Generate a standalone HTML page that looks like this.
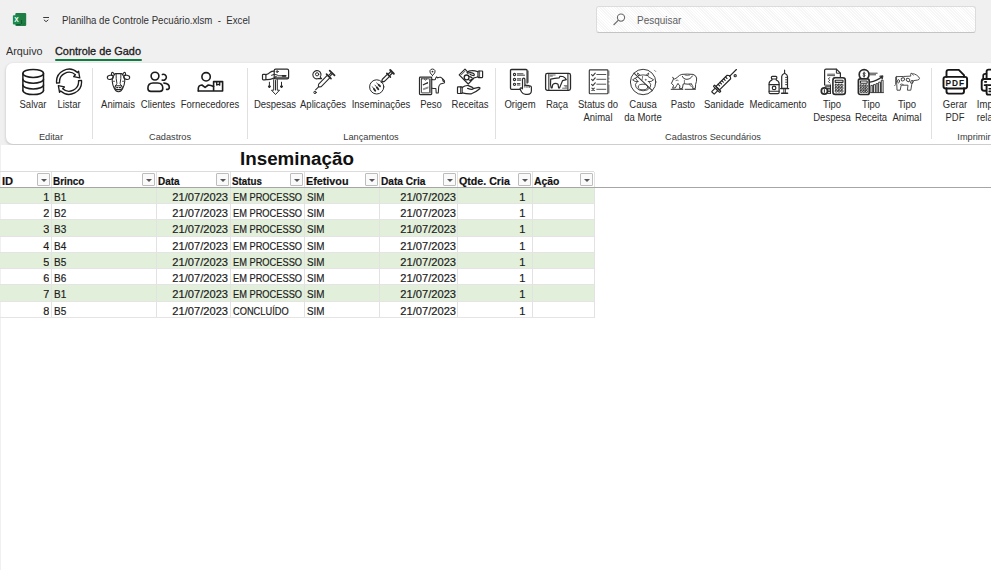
<!DOCTYPE html>
<html lang="pt-BR">
<head>
<meta charset="utf-8">
<title>Planilha de Controle Pecuário.xlsm - Excel</title>
<style>
*{box-sizing:border-box;margin:0;padding:0}
html,body{width:991px;height:570px;overflow:hidden;background:#f0f0f0;font-family:"Liberation Sans",sans-serif;color:#222}
.abs{position:absolute}
#title{left:62px;top:13.5px;font-size:10.5px;line-height:13px;color:#303030;white-space:nowrap;transform-origin:left center;transform:scaleX(.92)}
#search{left:596px;top:6px;width:380px;height:26.6px;background:repeating-linear-gradient(45deg,#fff 0,#fff 1px,#f6f6f6 1px,#f6f6f6 2px);border:1px solid #dcdcdc;border-bottom-color:#c4c4c4;border-radius:3px}
#search span{position:absolute;left:39.5px;top:6.5px;font-size:10.5px;line-height:13px;color:#5e5e5e;transform-origin:left center;transform:scaleX(.95)}
.tab{top:44.4px;font-size:11px;line-height:14px;color:#303030;white-space:nowrap;transform-origin:left center;transform:scaleX(.98)}
#ribbon{left:6px;top:63.4px;width:1000px;height:80.6px;background:#fff;border-radius:7px;box-shadow:0 1px 3px rgba(0,0,0,.22)}
.sep{top:68px;width:1px;height:71px;background:#e0e0e0}
.lbl{top:97.5px;font-size:10px;line-height:13px;color:#2b2b2b;text-align:center;white-space:nowrap;transform:translateX(-50%) scaleX(.95)}
.grp{top:130.7px;font-size:9.5px;line-height:12px;color:#3a3a3a;white-space:nowrap;transform:translateX(-50%) scaleX(.97)}
.ico{top:67px;width:30px;height:30px;transform:translateX(-50%)}
.ico svg{width:30px;height:30px;display:block;fill:none;stroke:#2a2a2a;stroke-width:1.2;stroke-linecap:round;stroke-linejoin:round}
#sheet{left:1px;top:145px;width:991px;height:425px;background:#fff}
#h1{left:240px;top:148.4px;font-size:18.9px;font-weight:bold;line-height:22px;color:#111;white-space:nowrap;transform-origin:left center;transform:scaleX(.995)}
.row{left:0;width:594px;height:16px}
.g{background:#e2efda}
.c{position:absolute;top:1.1px;height:100%;font-size:11.6px;line-height:16px;-webkit-text-stroke:.2px #1c1c1c;color:#1c1c1c;white-space:nowrap;overflow:hidden}
.c span{display:inline-block}
.r{text-align:right}
.r span{transform-origin:right center}
.l span{transform-origin:left center}
.hd{font-weight:bold;color:#111}
.vl{top:172px;width:1px;height:146px;background:#e2e2e2}
.hl{left:0;width:594px;height:1px;background:#e4e4e4}
.fb{top:173px;width:13px;height:13px;border:1px solid #bdbdbd;background:#fafafa;border-radius:1px}
.fb i{position:absolute;left:3px;top:5px;width:0;height:0;border-left:3px solid transparent;border-right:3px solid transparent;border-top:3px solid #555}
</style>
</head>
<body>
<svg class="abs" style="left:12px;top:12px" width="16" height="16" viewBox="12 12 16 16"><rect x="15.3" y="12.9" width="10.9" height="13.1" rx="1.1" fill="#1f7e46"/><rect x="12.9" y="15.3" width="7" height="9.2" rx=".8" fill="#1b8a4b"/><path d="M16.3 24.6H20.6M21.6 20V24M23.4 24.4l1-1" stroke="#12472a" stroke-width=".8" fill="none"/><text x="16.55" y="22.3" text-anchor="middle" font-family="Liberation Sans, sans-serif" font-weight="bold" font-size="6.6" fill="#fff">X</text></svg>
<svg class="abs" style="left:42px;top:16px" width="9" height="8" viewBox="42 16 9 8" fill="none" stroke="#3a3a3a" stroke-width="1"><path d="M43.2 17.5H49M43.9 19.8L46.1 21.7L48.3 19.8"/></svg>
<div class="abs" id="title">Planilha de Controle Pecuário.xlsm&nbsp; -&nbsp; Excel</div>
<div class="abs" id="search"><svg class="abs" style="left:15px;top:5px" width="14" height="14" viewBox="0 0 14 14" fill="none" stroke="#6a6a6a" stroke-width="1.1"><circle cx="9" cy="5.6" r="3.6"/><path d="M6.4 8.2L1.6 13"/></svg><span>Pesquisar</span></div>
<div class="abs tab" style="left:6.4px">Arquivo</div>
<div class="abs tab" style="left:54.8px;color:#1a1a1a;-webkit-text-stroke:.3px #1a1a1a;transform:scaleX(.99)">Controle de Gado</div>
<div class="abs" style="left:54.8px;top:59px;width:87.4px;height:2px;background:#107c41;border-radius:1px"></div>
<div class="abs" id="ribbon"></div>
<div class="abs sep" style="left:92px"></div>
<div class="abs sep" style="left:247px"></div>
<div class="abs sep" style="left:495px"></div>
<div class="abs sep" style="left:931px"></div>
<div class="abs ico" style="left:33px"><svg viewBox="0 0 30 30"><g stroke-width="1.5" stroke="#1c1c1c"><ellipse cx="15.2" cy="6.4" rx="10.3" ry="4"/><path d="M4.9 6.4V23.6M25.5 6.4V23.6"/><path d="M4.9 12.2A10.3 4 0 0 0 25.5 12.2M4.9 17.9A10.3 4 0 0 0 25.5 17.9M4.9 23.6A10.3 4 0 0 0 25.5 23.6"/></g></svg></div>
<div class="abs lbl" style="left:33px">Salvar</div>
<div class="abs ico" style="left:69px"><svg viewBox="0 0 30 30"><g stroke-width="1.35" stroke="#1c1c1c" fill="#fff"><path d="M2.62 16.06A12.5 12.5 0 0 1 23.41 5.46L24.55 4.20L25.76 10.85L19.73 9.55L21.41 7.69A9.5 9.5 0 0 0 5.60 15.74Z"/><path d="M27.48 13.44A12.5 12.5 0 0 1 6.69 24.04L5.55 25.30L4.34 18.65L10.37 19.95L8.69 21.81A9.5 9.5 0 0 0 24.50 13.76Z"/></g></svg></div>
<div class="abs lbl" style="left:69px">Listar</div>
<div class="abs ico" style="left:118px"><svg viewBox="0 0 30 30"><g stroke-width="1.1" stroke="#262626"><path d="M11.4 7.6Q11.8 6.6 12.8 6.6H18.2Q19.2 6.6 19.6 7.6"/><path d="M11.4 7.6Q9 10 9.2 14Q9.6 18 11 20.8Q12.6 24.6 15.5 24.8Q18.4 24.6 20 20.8Q21.4 18 21.8 14Q22 10 19.6 7.6"/><ellipse cx="7.3" cy="10.3" rx="3" ry="2.1" transform="rotate(-10 7.3 10.3)"/><ellipse cx="23.7" cy="10.3" rx="3" ry="2.1" transform="rotate(10 23.7 10.3)"/><path d="M8.7 8.3Q8.1 5.5 9.3 5.2Q10.5 5.5 11.3 7.5"/><path d="M22.3 8.3Q22.9 5.5 21.7 5.2Q20.5 5.5 19.7 7.5"/><path d="M13.1 7Q12.9 12 13.9 16.4Q13.6 18 12.2 18.9M17.9 7Q18.1 12 17.1 16.4Q17.4 18 18.8 18.9" stroke-width=".95"/><rect x="11.9" y="18.7" width="7.4" height="3.9" rx="1.9"/><path d="M13.7 20.6h1.1M16.4 20.6h1.1" stroke-width="1.2"/><path d="M10.3 14.3Q10.9 13.7 11.6 14.2M19.4 14.2Q20.1 13.7 20.7 14.3" stroke-width=".8"/></g></svg></div>
<div class="abs lbl" style="left:118px">Animais</div>
<div class="abs ico" style="left:158px"><svg viewBox="0 0 30 30"><g stroke-width="1.6" stroke="#1c1c1c"><circle cx="12" cy="9.1" r="3.9"/><path d="M4.9 21.3Q4.9 16 10 16H14.7Q19.8 16 19.8 21.3Q19.8 24.4 16.8 24.4H7.9Q4.9 24.4 4.9 21.3Z"/><path d="M19.4 7.4A3 3 0 1 1 19.2 13"/><path d="M20.9 16.1Q26.3 16.3 26.3 20.4Q26.3 22.4 23.6 22.4"/></g></svg></div>
<div class="abs lbl" style="left:158px">Clientes</div>
<div class="abs ico" style="left:210px"><svg viewBox="0 0 30 30"><g stroke-width="1.6" stroke="#1c1c1c"><circle cx="11.1" cy="9.8" r="4.2"/><path d="M3.3 24V21.6Q3.3 18.4 6.9 18L10.1 20.4L13.3 18Q16 18.2 18.6 19.4"/><path d="M3.3 24H27.6V14.6H18.6V24"/><path d="M21.7 14.6V18.1L23.2 17.2L24.7 18.1V14.6" stroke-width="1.3"/></g></svg></div>
<div class="abs lbl" style="left:210px">Fornecedores</div>
<div class="abs ico" style="left:275px"><svg viewBox="0 0 30 30"><g stroke-width="1" stroke="#2a2a2a" style="overflow:visible"><rect x="14.2" y="2.2" width="14.4" height="9.6" rx="1.4" stroke-width="1.2"/><rect x="2.5" y="7.3" width="3.4" height="5.6" rx=".8" stroke-width="1.2"/><path d="M5.9 7.6Q8.5 7.2 10.3 5.2Q11.4 4.2 14.2 4.2" stroke-width="1.2"/><path d="M5.9 12.6Q9.6 12.9 13.2 11.4L16.2 9.6" stroke-width="1.2"/><path d="M11.5 8.2Q14 6.6 17.3 7.9" /><path d="M17.8 8.8H26M22.8 8.8h2.6" /><path d="M22.6 8.8h2.8" stroke-width="1.8"/><path d="M15.6 10.8H28"/><circle cx="17.2" cy="4.6" r=".9"/><path d="M13.7 12.6V23.2H11.5L15.5 27.5L19.5 23.2H17.3V12.6M15.5 13.5V23"/><path d="M9.4 15.2V20M21.5 15.2V20"/><path d="M8.4 19.4L9.4 21L10.4 19.4ZM20.5 19.4L21.5 21L22.5 19.4Z" fill="#2a2a2a"/></g></svg></div>
<div class="abs lbl" style="left:275px">Despesas</div>
<div class="abs ico" style="left:323px"><svg viewBox="0 0 30 30"><g stroke-width="1" stroke="#2a2a2a"><path d="M12.2 10.2A4.1 4.1 0 1 0 10.3 11.6L13.6 11.6Z" stroke-width="1.1"/><circle cx="9.1" cy="7.3" r="1.6"/><circle cx="7" cy="25.4" r="1.2"/></g><g transform="translate(7.6 22.8) rotate(-45.5)" stroke-width="1.05" stroke="#2a2a2a"><path d="M0 0H4.6"/><path d="M4.6 -.7L6.199999999999999 -1.8H18.77185850116757V1.8H6.199999999999999L4.6 .7Z"/><path d="M18.77185850116757 -3.2V3.2" stroke-width="1.55"/><path d="M18.77185850116757 -0.8H23.37185850116757M18.77185850116757 0.8H23.37185850116757"/><path d="M23.571858501167572 -3.4V3.4" stroke-width="1.75"/></g></svg></div>
<div class="abs lbl" style="left:323px">Aplicações</div>
<div class="abs ico" style="left:381px"><svg viewBox="0 0 30 30"><g stroke-width="1" stroke="#2a2a2a"><circle cx="10.7" cy="19.9" r="7.1"/><path d="M8 22L9.2 23.7M10.9 20.4L12.3 22.3M12.7 17.8L14 19.2" stroke-width="1.9"/><path d="M6.4 19.8L8 22M9 18.1L10.9 20.4M10.6 15.9L12.7 17.8" stroke-width=".8"/></g><g transform="translate(15.3 15.4) rotate(-44.5)" stroke-width="1.2" stroke="#2a2a2a"><path d="M0 0H1.4"/><path d="M1.4 -.7L3.0 -1.5H10.215576538034508V1.5H3.0L1.4 .7Z"/><path d="M10.215576538034508 -2.5V2.5" stroke-width="1.7"/><path d="M10.215576538034508 -1.1H14.81557653803451M10.215576538034508 1.1H14.81557653803451"/><path d="M15.015576538034509 -2.6V2.6" stroke-width="1.9"/></g></svg></div>
<div class="abs lbl" style="left:381px">Inseminações</div>
<div class="abs ico" style="left:431px"><svg viewBox="0 0 30 30"><g stroke-width="1" stroke="#2a2a2a"><rect x="3.5" y="10.1" width="12.2" height="17.5" rx=".8" stroke-width="1.2"/><rect x="5.4" y="11.8" width="8.3" height="14.1" rx=".3" stroke-width=".9"/><path d="M14.7 11.8V26" stroke-width="1" stroke="#777"/><path d="M8.3 12L9.5 13.1L10.7 12" stroke-width=".9"/><path d="M7.3 17.8L11.4 15.9" stroke-width="1.2"/><circle cx="11.5" cy="15.8" r=".6" fill="#2a2a2a" stroke="none"/><path d="M7.3 21.8L12 20.1M7.6 22.6L12 21" stroke-width=".7" stroke="#555"/><path d="M16.5 8.6Q13.2 5.6 13.9 3.8A2.8 2.8 0 0 1 19.1 3.8Q19.8 5.6 16.5 8.6Z" stroke-width=".95"/><circle cx="16.5" cy="4.6" r=".9" fill="#2a2a2a" stroke="none"/><path d="M15.9 12.6Q17.8 13 19.3 12.4Q19.8 10.6 20.6 9.9L21.6 10.9Q23 9.9 24.6 10.3Q26.6 11.4 28.5 13.8Q28.9 15.4 28.1 16L24.4 17Q23 18.4 22.7 19.8L22.3 26H20.2L19.9 21.5Q18 21.6 15.9 21.2" stroke-width="1.05"/><path d="M26.6 12.6L27.4 14.4" stroke-width="1.2"/></g></svg></div>
<div class="abs lbl" style="left:431px">Peso</div>
<div class="abs ico" style="left:470px"><svg viewBox="0 0 30 30"><g stroke-width="1.2" stroke="#262626"><rect x="23" y="4" width="4.6" height="6.6" rx=".5" stroke-width="1.2"/><path d="M24.6 4V10.6" stroke-width=".8"/><path d="M23 4.8Q19.5 3.4 16.6 3.6Q13.6 3.6 12 5.6"/><path d="M23 9.8Q20.6 10.8 19 10.8Q18.4 12.6 16 12.6"/><path d="M4.2 7.9L10 2.1L12.6 4.8M4.2 7.9L13.2 17L17 13.2" /><path d="M6.3 7.9L10 4.2" stroke-width=".8"/><circle cx="11.6" cy="10.4" r="2.4" stroke-width="1.3"/><path d="M12.6 6.2Q15.6 4.8 18.6 6.6Q19.8 7.4 19 8.6Q16.8 8.4 15.2 7.4"/><path d="M14.6 9.6Q16.2 9.8 17.4 11.2M13.6 12.6Q14.8 13.6 16 13.4"/><rect x="2.5" y="19.9" width="4.6" height="6.6" rx=".5" stroke-width="1.2"/><path d="M5.5 19.9V26.5" stroke-width=".8"/><path d="M7.1 20.6Q10.6 18 13.4 18.6L17.4 20.4Q18.8 21.2 17.8 22.2Q16 22.6 12.6 21.4"/><path d="M18.2 21.6L23.6 20.4Q25.4 20.4 24.8 21.8Q20.6 25.4 16.4 26.8Q12.6 27.2 7.1 25.8"/></g></svg></div>
<div class="abs lbl" style="left:470px">Receitas</div>
<div class="abs ico" style="left:520px"><svg viewBox="0 0 30 30"><g stroke-width="1.1" stroke="#2a2a2a"><path d="M15 22.3H6.6Q5.5 22.3 5.5 21.2V3.6Q5.5 2.5 6.6 2.5H21Q22.1 2.5 22.1 3.6V16" stroke-width="1.3"/><path d="M23.1 4V15.4" stroke-width=".8"/><circle cx="9.5" cy="7.5" r="1.1"/><circle cx="9.5" cy="12.5" r="1.1"/><circle cx="9.5" cy="17.3" r="1.1"/><path d="M12.3 6.8H18M12.3 8.2H19.6M12.3 11.8H15.8M12.3 13.2H15.8M12.3 16.6H15M12.3 18H15" stroke-width=".9"/><path d="M17.5 21V12.4Q17.5 11.2 18.7 11.2Q19.9 11.2 19.9 12.4V18.4Q21 17.6 22 18.6Q23.2 17.9 24.2 19Q26.4 18.6 26.4 20.6V23.6Q26.4 27.4 22.6 27.4H20.6Q18 27.4 16.6 25L15.2 22.4Q14.8 21 16 20.8Q16.8 20.8 17.5 21.8" fill="#fff" stroke-width="1.2"/><path d="M19.9 18.4V20.2M22 18.8V20.4M24.2 19.2V20.6" stroke-width=".9"/></g></svg></div>
<div class="abs lbl" style="left:520px">Origem</div>
<div class="abs ico" style="left:557px"><svg viewBox="0 0 30 30"><g stroke-width="1.05" stroke="#2a2a2a"><rect x="3.6" y="6.4" width="24.9" height="17" rx="1.8" stroke-width="1.3"/><path d="M6.5 6.4V23.4M7.1 6.4V23.4M25.6 6.4V23.4M26.2 6.4V23.4" stroke-width=".6"/><path d="M8.7 12.1L8.5 17.5L9.2 20.8H10.1L10.7 17.6Q13.2 15.3 16 17.2L16.6 20.9H17.5L19.9 15.3L20.6 13.6L24.3 12.6Q23 10.4 20.8 9.5L17.9 9.3L17.1 10.9Q12.6 11.4 8.7 12.1Z" stroke-width="1.2"/><path d="M8.2 8H13.2M8.2 9.1H10.4M22.2 18.7H25M23.2 19.9H25M20.6 21.2H25" stroke-width=".7"/></g></svg></div>
<div class="abs lbl" style="left:557px">Raça</div>
<div class="abs ico" style="left:598px"><svg viewBox="0 0 30 30"><g stroke-width=".9" stroke="#3c3c3c"><rect x="6.3" y="2.9" width="18.6" height="23.8" rx=".8" stroke-width="1.15"/><path d="M25.9 4V8.6M25.9 11V12M25.9 14.4V15.2M25.9 18V26" stroke-width=".7"/><path d="M8.6 7.6L9.8 8.9L12.2 6.1M8.6 12.4L9.8 13.700000000000001L12.2 10.9M8.6 17.3L9.8 18.6L12.2 15.8" stroke-width="1.15"/><path d="M8.9 21.1L11.3 23.5M11.3 21.1L8.9 23.5" stroke-width="1.1"/><path d="M13.8 7.5H22.8M13.8 12.3H22.8M13.8 17.2H22.8M13.8 22.3H22.8" stroke-width="1" stroke="#555"/></g></svg></div>
<div class="abs lbl" style="left:598px">Status do<br>Animal</div>
<div class="abs ico" style="left:643px"><svg viewBox="0 0 30 30"><g stroke-width=".9" stroke="#3a3a3a"><circle cx="15.1" cy="15" r="12.7" stroke-width="1"/><path d="M6 6.1L24.3 23.7" stroke-width="1.05"/><path d="M10.4 8.4Q15.1 7.3 19.8 8.4"/><path d="M10.6 8.8Q9 7.6 9.6 6Q11 6.6 11.8 8.2"/><path d="M19.6 8.8Q21.2 7.6 20.6 6Q19.2 6.6 18.4 8.2"/><path d="M10 9.6L4.6 12.8Q6.6 15.2 10 14.6M7.4 11.2L10 14.6"/><path d="M20.2 9.6L25.6 12.8Q23.6 15.2 20.2 14.6"/><path d="M9.2 14.8Q6.2 17 8 20.4Q10.4 23.8 15.1 23.8Q19.8 23.8 22.2 20.4Q24 17 21 14.8"/><ellipse cx="15" cy="20" rx="4.8" ry="2.8"/><path d="M14.6 9.4Q14.6 11.6 14 13" stroke-width=".7"/><circle cx="17.6" cy="12.8" r=".5" stroke-width=".6"/><path d="M26.4 3.2l1.4 1.4" stroke-width=".6"/></g></svg></div>
<div class="abs lbl" style="left:643px">Causa<br>da Morte</div>
<div class="abs ico" style="left:683px"><svg viewBox="0 0 30 30"><g stroke-width=".95" stroke="#333"><path d="M4.9 10.6L6.4 12Q8 11.6 9.2 10.4Q11.4 8 13.8 7.4Q19 6.8 25 7.4Q28 8.2 28.6 11Q28.8 14.6 27.6 17.4L27.4 21.4H24.6L25 19.4Q23.6 18.6 23.6 16.8Q20 17.6 16.4 16.8L15.2 17L14.4 21.4H11.4L12 18.8Q10.6 18 10 16.4Q8.4 18.6 7.4 20.8L4.6 21.2L5.6 18.4L3.4 16.4Q4.6 14 5.4 12.2Z"/><path d="M14.3 9.4Q15.4 12.2 18 12.3Q22.4 12.6 24.4 9"/><path d="M3.2 22.3H14.9M17.1 22.3H27.4" stroke-width="1"/><path d="M21.4 17Q22 19.4 23.4 19.6M16.4 13.4V16.6M8 13.4Q9.4 12.6 10.2 13.4" stroke-width=".7"/><path d="M17 8.2Q19 9 21.6 8.2" stroke-width=".6"/></g></svg></div>
<div class="abs lbl" style="left:683px">Pasto</div>
<div class="abs ico" style="left:724px"><svg viewBox="0 0 30 30"><g stroke-width="1" stroke="#2a2a2a"><circle cx="26.2" cy="8.7" r="1.1" stroke-width="1.1"/></g><g transform="translate(27.4 2.5) rotate(135.0)" stroke-width="1.15" stroke="#262626"><path d="M0 0H9.4"/><path d="M9.4 -.9L10.6 -2.5H26.4V2.5H10.6L9.4 .9Z"/><rect x="26.4" y="-4.4" width="1.7" height="8.8" rx=".4"/><rect x="28.1" y="-1.8" width="5.1" height="3.6" rx=".4"/><path d="M13 2.5V.3"/><path d="M15.6 2.5V.3"/><path d="M18.2 2.5V.3"/><path d="M20.8 2.5V.3"/><path d="M23.4 2.5V.3"/></g></svg></div>
<div class="abs lbl" style="left:724px">Sanidade</div>
<div class="abs ico" style="left:778px"><svg viewBox="0 0 30 30"><g stroke-width="1.1" stroke="#2a2a2a"><rect x="8.4" y="9.4" width="5.4" height="2.6" rx=".9" stroke-width="1.2"/><path d="M9 12V13Q6.1 14.2 6.1 16.4V25.4Q6.1 26.6 7.3 26.6H14.9Q16.1 26.6 16.1 25.4V16.4Q16.1 14.2 13.2 13V12" stroke-width="1.2"/><path d="M6.1 17.6H16.1M6.1 24.2H16.1"/><circle cx="11.1" cy="20.9" r="1.8" stroke-width="1.2"/><path d="M21.6 3V6.2" /><path d="M21.6 6.2Q18.7 7.6 18.7 9.6V21.4H24.5V9.6Q24.5 7.6 21.6 6.2Z" stroke-width="1.2"/><path d="M17.6 21.6H25.6" stroke-width="1.4"/><path d="M20.8 21.6V25.6M22.4 21.6V25.6" stroke-width=".9"/><path d="M18.6 26.2H24.6" stroke-width="1.4"/><path d="M22.6 10.4H24.5M22.6 12.8H24.5M22.6 15.2H24.5M22.6 17.6H24.5" stroke-width=".9"/></g></svg></div>
<div class="abs lbl" style="left:778px">Medicamento</div>
<div class="abs ico" style="left:832px"><svg viewBox="0 0 30 30"><g stroke-width="1" stroke="#2a2a2a"><path d="M7.6 18V3.6Q7.6 2.2 9 2.2H19.4L23.4 6.2V10" stroke-width="1.2"/><path d="M19.4 2.2V6.2H23.4" /><path d="M10.6 7.2H17.6M10.6 8.6H17.6M17 10.4H21" stroke-width=".8"/><path d="M12.6 10.6L11.4 12L12.8 13.2L11.4 14.6L12.8 16" stroke-width=".9"/><rect x="15.9" y="10.8" width="12.4" height="16.6" rx="2.4" stroke-width="1.6" fill="#fff"/><rect x="18.2" y="13.2" width="7.8" height="2.2" rx=".4" stroke-width="1.1"/><g stroke-width=".85"><rect x="18.3" y="17.3" width="2" height="2" rx=".3"/><rect x="18.3" y="20.2" width="2" height="2" rx=".3"/><rect x="18.3" y="23.1" width="2" height="2" rx=".3"/><rect x="21.1" y="17.3" width="2" height="2" rx=".3"/><rect x="21.1" y="20.2" width="2" height="2" rx=".3"/><rect x="21.1" y="23.1" width="2" height="2" rx=".3"/><rect x="23.9" y="17.3" width="2" height="2" rx=".3"/><rect x="23.9" y="20.2" width="2" height="2" rx=".3"/><rect x="23.9" y="23.1" width="2" height="2" rx=".3"/></g><path d="M8.6 18.2H13.2M8.2 19.8H13.4M8.6 21.4H13.4M10 23H13.4M11 24.6H13.4M10.6 26.4H13.4" stroke-width="1"/><path d="M13.5 18V26.6" stroke-width="1"/><circle cx="7.4" cy="24" r="3.1" stroke-width="1.7" fill="#fff"/><path d="M7.4 22.6V25.4" stroke-width="1"/></g></svg></div>
<div class="abs lbl" style="left:832px">Tipo<br>Despesa</div>
<div class="abs ico" style="left:871px"><svg viewBox="0 0 30 30"><g stroke-width="1" stroke="#2a2a2a"><circle cx="8.1" cy="7.6" r="4.9" stroke-width="1.7"/><path d="M8.1 5V10.2M9.2 6.2Q8 5.4 7.2 6.2Q6.8 7.2 8.1 7.6Q9.4 8 9 9Q8 9.8 7 9" stroke-width=".9"/><path d="M13.4 6.2H21.2M14 7.8H19.6" stroke-width=".9"/><rect x="2.4" y="11.9" width="10.8" height="15.6" rx="1.8" stroke-width="1.7" fill="#fff"/><rect x="4.4" y="14" width="6.8" height="2.2" rx=".4" stroke-width="1.1"/><g stroke-width=".85"><rect x="4.2" y="18" width="1.9" height="1.9" rx=".3"/><rect x="4.2" y="20.8" width="1.9" height="1.9" rx=".3"/><rect x="4.2" y="23.6" width="1.9" height="1.9" rx=".3"/><rect x="6.85" y="18" width="1.9" height="1.9" rx=".3"/><rect x="6.85" y="20.8" width="1.9" height="1.9" rx=".3"/><rect x="6.85" y="23.6" width="1.9" height="1.9" rx=".3"/><rect x="9.5" y="18" width="1.9" height="1.9" rx=".3"/><rect x="9.5" y="20.8" width="1.9" height="1.9" rx=".3"/><rect x="9.5" y="23.6" width="1.9" height="1.9" rx=".3"/></g><path d="M14.9 25.2V18.4H16.7V25.2M17.5 25.2V17.6H19.3V25.2M20.1 25.2V16.6H21.9V25.2M22.7 25.2V15.2H24.5V25.2M25.3 25.2V13.2H27.1V25.2" stroke-width=".9"/><path d="M14.6 25.6H27.4" stroke-width=".9"/><path d="M14 15.2Q21 14 26 9.8" stroke-width="1.2"/><path d="M24 9L27 8.8L26.4 11.8Z" fill="#2a2a2a" stroke-width=".8"/></g></svg></div>
<div class="abs lbl" style="left:871px">Tipo<br>Receita</div>
<div class="abs ico" style="left:907px"><svg viewBox="0 0 30 30"><g stroke-width=".95" stroke="#444"><path d="M3.7 10.2V17.6L2.7 18.6" /><path d="M4.6 9.6Q4.2 13.6 4.8 17.6L5 23.2H8.2L9.2 18.2H16L15.4 23.2H18.8L19.8 17.2Q21 15.4 21.6 13.6L25.4 13.1Q27.6 12.6 27.5 11.4Q27.4 10 24.6 8.1Q22.8 6.8 20.6 6.7L19 6.2Q18.4 7.6 18.8 9.1Q12 9.6 4.6 9.6Z"/><ellipse cx="10.9" cy="12.3" rx="1.8" ry="1.5" transform="rotate(-30 10.9 12.3)"/><ellipse cx="16" cy="12.9" rx="1.9" ry="1.5" transform="rotate(35 16 12.9)"/><ellipse cx="6.5" cy="14.2" rx="1" ry="1.7"/><ellipse cx="19.8" cy="14.8" rx="1" ry="1.5" transform="rotate(35 19.8 14.8)"/><path d="M8.2 17.4Q9.6 16.2 11.4 17.6" stroke-width=".8"/><path d="M20.4 7.4L21.4 8.2" stroke-width=".7"/></g></svg></div>
<div class="abs lbl" style="left:907px">Tipo<br>Animal</div>
<div class="abs ico" style="left:955px"><svg viewBox="0 0 30 30"><g stroke-width="1.9" stroke="#161616"><path d="M6.5 9.9V5Q6.5 2.9 8.6 2.9H18.8L24 8.1V9.9"/><path d="M6.5 21.3V24.6Q6.5 26.6 8.5 26.6H22Q24 26.6 24 24.6V21.3"/><rect x="3.5" y="9.9" width="23.6" height="11.6" rx="2.2"/></g><text x="15.3" y="18.6" text-anchor="middle" font-family="Liberation Sans, sans-serif" font-weight="bold" font-size="8.3" letter-spacing="1" fill="#161616" stroke="#161616" stroke-width=".12">PDF</text></svg></div>
<div class="abs lbl" style="left:955px">Gerar<br>PDF</div>
<div class="abs ico" style="left:994px"><svg viewBox="0 0 30 30"><g stroke-width="1.9" stroke="#161616"><path d="M7.6 12V4.6Q7.6 2.6 9.6 2.6H26"/><path d="M7.4 6.8H6.2Q4.2 6.8 4.2 8.8V12" stroke-width="1.7"/><path d="M7.6 23.7H5.2Q2.7 23.7 2.7 21.2V14.5Q2.7 12 5.2 12H30"/><path d="M5.6 18.2H30" stroke-width="1.7"/><path d="M7.6 18.2V26Q7.6 27.6 9.2 27.6H30" fill="#fff"/><path d="M5.9 14.8H7.3" stroke-width="1.7"/><path d="M10.2 21.7H16M10.2 24.4H16" stroke-width="1.6"/></g></svg></div>
<div class="abs lbl" style="left:994px">Imprimir<br>relatório</div>
<div class="abs grp" style="left:51.3px">Editar</div>
<div class="abs grp" style="left:170px">Cadastros</div>
<div class="abs grp" style="left:371px">Lançamentos</div>
<div class="abs grp" style="left:713px">Cadastros Secundários</div>
<div class="abs grp" style="left:973.5px">Imprimir</div>
<div class="abs" id="sheet"></div>
<div class="abs" id="h1">Inseminação</div>
<div class="abs row" style="top:171.6px;height:16px">
<div class="c l hd" style="left:1.8px;width:49.2px"><span style="transform:scaleX(0.96)">ID</span></div>
<div class="c l hd" style="left:53.2px;width:102.8px"><span style="transform:scaleX(0.855)">Brinco</span></div>
<div class="c l hd" style="left:158.2px;width:71.8px"><span style="transform:scaleX(0.86)">Data</span></div>
<div class="c l hd" style="left:232.2px;width:71.8px"><span style="transform:scaleX(0.845)">Status</span></div>
<div class="c l hd" style="left:306.2px;width:72.8px"><span style="transform:scaleX(0.93)">Efetivou</span></div>
<div class="c l hd" style="left:381.2px;width:75.8px"><span style="transform:scaleX(0.873)">Data Cria</span></div>
<div class="c l hd" style="left:459.2px;width:72.8px"><span style="transform:scaleX(0.918)">Qtde. Cria</span></div>
<div class="c l hd" style="left:534.2px;width:59.8px"><span style="transform:scaleX(0.896)">Ação</span></div>
</div>
<div class="abs row g" style="top:188px;height:16px">
<div class="c r" style="left:0px;width:49px"><span style="transform:scaleX(0.95)">1</span></div>
<div class="c l" style="left:53.6px;width:102.4px"><span style="transform:scaleX(0.86)">B1</span></div>
<div class="c r" style="left:156px;width:72px"><span style="transform:scaleX(0.96)">21/07/2023</span></div>
<div class="c l" style="left:232.6px;width:71.4px"><span style="transform:scaleX(0.8)">EM PROCESSO</span></div>
<div class="c l" style="left:306.6px;width:72.4px"><span style="transform:scaleX(0.85)">SIM</span></div>
<div class="c r" style="left:379px;width:76.8px"><span style="transform:scaleX(0.96)">21/07/2023</span></div>
<div class="c r" style="left:457px;width:68.8px"><span style="transform:scaleX(0.95)">1</span></div>
</div>
<div class="abs row" style="top:204px;height:16px">
<div class="c r" style="left:0px;width:49px"><span style="transform:scaleX(0.95)">2</span></div>
<div class="c l" style="left:53.6px;width:102.4px"><span style="transform:scaleX(0.86)">B2</span></div>
<div class="c r" style="left:156px;width:72px"><span style="transform:scaleX(0.96)">21/07/2023</span></div>
<div class="c l" style="left:232.6px;width:71.4px"><span style="transform:scaleX(0.8)">EM PROCESSO</span></div>
<div class="c l" style="left:306.6px;width:72.4px"><span style="transform:scaleX(0.85)">SIM</span></div>
<div class="c r" style="left:379px;width:76.8px"><span style="transform:scaleX(0.96)">21/07/2023</span></div>
<div class="c r" style="left:457px;width:68.8px"><span style="transform:scaleX(0.95)">1</span></div>
</div>
<div class="abs row g" style="top:220px;height:17px">
<div class="c r" style="left:0px;width:49px"><span style="transform:scaleX(0.95)">3</span></div>
<div class="c l" style="left:53.6px;width:102.4px"><span style="transform:scaleX(0.86)">B3</span></div>
<div class="c r" style="left:156px;width:72px"><span style="transform:scaleX(0.96)">21/07/2023</span></div>
<div class="c l" style="left:232.6px;width:71.4px"><span style="transform:scaleX(0.8)">EM PROCESSO</span></div>
<div class="c l" style="left:306.6px;width:72.4px"><span style="transform:scaleX(0.85)">SIM</span></div>
<div class="c r" style="left:379px;width:76.8px"><span style="transform:scaleX(0.96)">21/07/2023</span></div>
<div class="c r" style="left:457px;width:68.8px"><span style="transform:scaleX(0.95)">1</span></div>
</div>
<div class="abs row" style="top:237px;height:16px">
<div class="c r" style="left:0px;width:49px"><span style="transform:scaleX(0.95)">4</span></div>
<div class="c l" style="left:53.6px;width:102.4px"><span style="transform:scaleX(0.86)">B4</span></div>
<div class="c r" style="left:156px;width:72px"><span style="transform:scaleX(0.96)">21/07/2023</span></div>
<div class="c l" style="left:232.6px;width:71.4px"><span style="transform:scaleX(0.8)">EM PROCESSO</span></div>
<div class="c l" style="left:306.6px;width:72.4px"><span style="transform:scaleX(0.85)">SIM</span></div>
<div class="c r" style="left:379px;width:76.8px"><span style="transform:scaleX(0.96)">21/07/2023</span></div>
<div class="c r" style="left:457px;width:68.8px"><span style="transform:scaleX(0.95)">1</span></div>
</div>
<div class="abs row g" style="top:253px;height:16px">
<div class="c r" style="left:0px;width:49px"><span style="transform:scaleX(0.95)">5</span></div>
<div class="c l" style="left:53.6px;width:102.4px"><span style="transform:scaleX(0.86)">B5</span></div>
<div class="c r" style="left:156px;width:72px"><span style="transform:scaleX(0.96)">21/07/2023</span></div>
<div class="c l" style="left:232.6px;width:71.4px"><span style="transform:scaleX(0.8)">EM PROCESSO</span></div>
<div class="c l" style="left:306.6px;width:72.4px"><span style="transform:scaleX(0.85)">SIM</span></div>
<div class="c r" style="left:379px;width:76.8px"><span style="transform:scaleX(0.96)">21/07/2023</span></div>
<div class="c r" style="left:457px;width:68.8px"><span style="transform:scaleX(0.95)">1</span></div>
</div>
<div class="abs row" style="top:269px;height:16px">
<div class="c r" style="left:0px;width:49px"><span style="transform:scaleX(0.95)">6</span></div>
<div class="c l" style="left:53.6px;width:102.4px"><span style="transform:scaleX(0.86)">B6</span></div>
<div class="c r" style="left:156px;width:72px"><span style="transform:scaleX(0.96)">21/07/2023</span></div>
<div class="c l" style="left:232.6px;width:71.4px"><span style="transform:scaleX(0.8)">EM PROCESSO</span></div>
<div class="c l" style="left:306.6px;width:72.4px"><span style="transform:scaleX(0.85)">SIM</span></div>
<div class="c r" style="left:379px;width:76.8px"><span style="transform:scaleX(0.96)">21/07/2023</span></div>
<div class="c r" style="left:457px;width:68.8px"><span style="transform:scaleX(0.95)">1</span></div>
</div>
<div class="abs row g" style="top:285px;height:17px">
<div class="c r" style="left:0px;width:49px"><span style="transform:scaleX(0.95)">7</span></div>
<div class="c l" style="left:53.6px;width:102.4px"><span style="transform:scaleX(0.86)">B1</span></div>
<div class="c r" style="left:156px;width:72px"><span style="transform:scaleX(0.96)">21/07/2023</span></div>
<div class="c l" style="left:232.6px;width:71.4px"><span style="transform:scaleX(0.8)">EM PROCESSO</span></div>
<div class="c l" style="left:306.6px;width:72.4px"><span style="transform:scaleX(0.85)">SIM</span></div>
<div class="c r" style="left:379px;width:76.8px"><span style="transform:scaleX(0.96)">21/07/2023</span></div>
<div class="c r" style="left:457px;width:68.8px"><span style="transform:scaleX(0.95)">1</span></div>
</div>
<div class="abs row" style="top:302px;height:16px">
<div class="c r" style="left:0px;width:49px"><span style="transform:scaleX(0.95)">8</span></div>
<div class="c l" style="left:53.6px;width:102.4px"><span style="transform:scaleX(0.86)">B5</span></div>
<div class="c r" style="left:156px;width:72px"><span style="transform:scaleX(0.96)">21/07/2023</span></div>
<div class="c l" style="left:232.6px;width:71.4px"><span style="transform:scaleX(0.8)">CONCLUÍDO</span></div>
<div class="c l" style="left:306.6px;width:72.4px"><span style="transform:scaleX(0.85)">SIM</span></div>
<div class="c r" style="left:379px;width:76.8px"><span style="transform:scaleX(0.96)">21/07/2023</span></div>
<div class="c r" style="left:457px;width:68.8px"><span style="transform:scaleX(0.95)">1</span></div>
</div>
<div class="abs vl" style="left:51px"></div>
<div class="abs vl" style="left:156px"></div>
<div class="abs vl" style="left:230px"></div>
<div class="abs vl" style="left:304px"></div>
<div class="abs vl" style="left:379px"></div>
<div class="abs vl" style="left:457px"></div>
<div class="abs vl" style="left:532px"></div>
<div class="abs vl" style="left:594px"></div>
<div class="abs hl" style="top:203px"></div>
<div class="abs hl" style="top:219px"></div>
<div class="abs hl" style="top:236px"></div>
<div class="abs hl" style="top:252px"></div>
<div class="abs hl" style="top:268px"></div>
<div class="abs hl" style="top:284px"></div>
<div class="abs hl" style="top:301px"></div>
<div class="abs hl" style="top:317px"></div>
<div class="abs hl" style="top:171px;background:#dcdcdc"></div>
<div class="abs hl" style="top:187px;background:#a6a6a6;width:991px"></div>
<div class="abs fb" style="left:37px"><i></i></div>
<div class="abs fb" style="left:142px"><i></i></div>
<div class="abs fb" style="left:216px"><i></i></div>
<div class="abs fb" style="left:290px"><i></i></div>
<div class="abs fb" style="left:365px"><i></i></div>
<div class="abs fb" style="left:443px"><i></i></div>
<div class="abs fb" style="left:518px"><i></i></div>
<div class="abs fb" style="left:580px"><i></i></div>
</body>
</html>
